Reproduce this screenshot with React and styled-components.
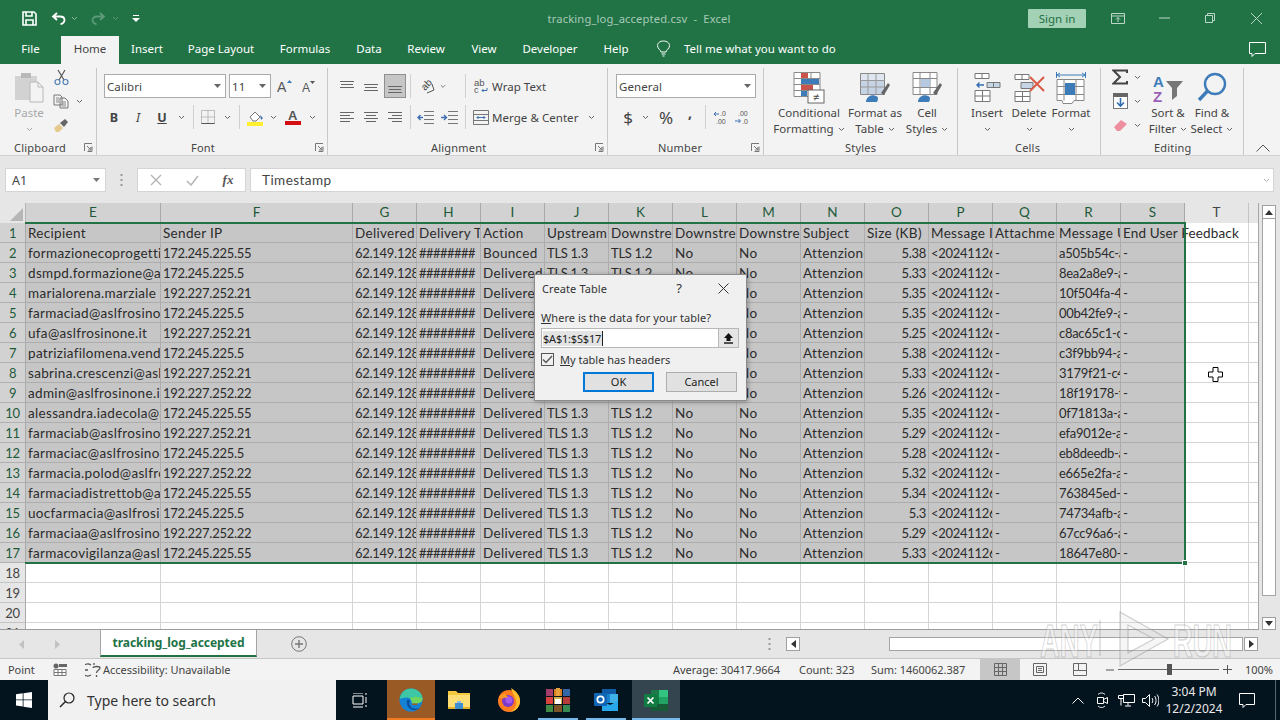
import React from 'react';
import styled, { createGlobalStyle } from 'styled-components';

const UI = '"Noto Sans", "Open Sans", sans-serif';
const GRID = 'Lato, "Liberation Sans", sans-serif';
const GREEN = '#217346';

const Global = createGlobalStyle`
  html, body { margin: 0; padding: 0; background: #fff; }
  * { box-sizing: border-box; }
`;

const Page = styled.div`
  width: 1280px; height: 720px; overflow: hidden; position: relative;
  display: flex; flex-direction: column; font-family: ${UI}; color: #444;
`;

/* ---------- title bar ---------- */
const TitleBar = styled.div`
  height: 36px; background: ${GREEN}; display: flex; align-items: center; position: relative;
`;
const QuickSlot = styled.div`
  width: ${p => p.$w}px; height: 36px; display: flex; align-items: center; justify-content: center;
  color: ${p => p.$dim ? '#5c9a78' : '#fff'}; flex: none;
`;
const DocTitle = styled.div`
  flex: none; width: ${p => p.$w}px; text-align: center; font-size: 11.2px; color: #a7c9b6;
  letter-spacing: .15px; white-space: pre;
`;
const SignIn = styled.div`
  width: 58px; height: 19px; background: #a3d1b5; border-radius: 1px; color: #1f7044;
  font-size: 11.5px; line-height: 19px; text-align: center; flex: none;
`;
const WinBtn = styled.div`
  width: 46px; height: 36px; flex: none; display: flex; align-items: center; justify-content: center;
  color: #bcd7c8; margin-left: ${p => p.$ml || 0}px;
`;

/* ---------- tabs ---------- */
const TabBar = styled.div`
  height: 28px; background: ${GREEN}; display: flex; align-items: flex-end; color: #fff;
`;
const Tab = styled.div`
  width: ${p => p.$w}px; height: ${p => p.$active ? 30 : 28}px; flex: none; text-align: center;
  font-size: 11.5px; line-height: 25px; padding-left: ${p => p.$pl || 0}px;
  background: ${p => p.$active ? '#f3f3f3' : 'transparent'};
  color: ${p => p.$active ? '#444' : '#fff'};
  ${p => p.$active ? 'line-height: 29px;' : ''}
`;
const TellMe = styled.div`
  display: flex; align-items: center; font-size: 11.5px; height: 25px; padding-left: 13px; flex: 1; color: #fff; align-self: flex-start;
`;
const TellIcon = styled.span`
  display: flex; width: 16px; margin-right: 12px;
`;
const CommentBtn = styled.div`
  width: 46px; display: flex; justify-content: center; height: 28px; align-items: center;
`;

/* ---------- ribbon ---------- */
const Ribbon = styled.div`
  height: 92px; background: #f3f3f3; display: flex; border-bottom: 1px solid #d2d2d2; flex: none;
`;
const Group = styled.div`
  width: ${p => p.$w}px; flex: none; display: flex; flex-direction: column; height: 91px;
  position: relative;
  &::after {
    content: ''; position: absolute; right: 0; top: 4px; bottom: 0; width: 1px; background: #c8c8c8;
  }
`;
const GroupBody = styled.div`
  height: 76px; flex: none; padding-left: ${p => p.$pl || 0}px;
  display: flex; flex-direction: ${p => p.$col ? 'column' : 'row'}; ${p => p.$col ? 'padding-top: 10px; gap: 7px;' : ''}
`;
const GroupLabel = styled.div`
  height: 15px; display: flex; align-items: center; font-size: 11px; color: #444;
  padding-left: ${p => p.$pl}px; padding-right: 4px; letter-spacing: .2px; line-height: 15px;
`;
const Launcher = styled.span`
  margin-left: auto; display: flex;
`;
const Row = styled.div`
  height: 24px; display: flex; align-items: center; padding-left: ${p => p.$pl || 0}px; flex: none;
`;
const Slot = styled.div`
  width: ${p => p.$w}px; height: 24px; flex: none; display: flex; align-items: center; justify-content: center;
  font-size: ${p => p.$fs || 12}px; color: ${p => p.$c || '#444'}; padding-bottom: ${p => p.$pb || 0}px;
`;
const ActiveSlot = styled(Slot)`
  height: 24px; background: #c6c6c6; border: 1px solid #8f8f8f; margin-left: 1px;
`;
const Sep = styled.div`
  width: ${p => p.$w}px; height: 24px; flex: none; display: flex; justify-content: center;
  &::before { content: ''; width: 1px; height: 24px; background: #d0d0d0; }
`;
const Combo = styled.div`
  width: ${p => p.$w}px; height: 24px; background: #fff; border: 1px solid #ababab; flex: none;
  margin-right: ${p => p.$mr || 0}px; display: flex; align-items: center; justify-content: space-between;
  padding: 0 4px 0 2px; font-size: 11.5px; color: #444; letter-spacing: .1px;
`;
const RowText = styled.span`
  font-size: 11.5px; color: #444; white-space: nowrap; width: ${p => p.$w}px; flex: none; letter-spacing: .05px;
`;
const BigBtn = styled.div`
  width: ${p => p.$w}px; flex: none; padding-top: 6px; display: flex; flex-direction: column; align-items: center;
  font-size: 11.5px; line-height: 16px; color: ${p => p.$dis ? '#a8a8a8' : '#444'}; text-align: center;
`;
const BigIcon = styled.div`
  height: 35px; display: flex; align-items: center; justify-content: center; flex: none;
`;
const Line = styled.div`
  height: 16px; white-space: nowrap; display: flex; align-items: center; justify-content: center; gap: 4px;
`;
const StackCol = styled.div`
  display: flex; flex-direction: column; padding-top: 1px; flex: none; width: ${p => p.$w}px; margin-left: ${p => p.$ml || 0}px;
`;
const Collapse = styled.div`
  flex: 1; display: flex; align-items: flex-end; justify-content: center; padding-bottom: 3px; padding-left: 2px;
`;

/* ---------- formula bar ---------- */
const FormulaBar = styled.div`
  height: 47px; background: #e6e6e6; flex: none; display: flex; padding: 12px 6px 0 5px; align-items: flex-start;
`;
const NameBox = styled.div`
  width: 101px; height: 24px; background: #fff; border: 1px solid #d4d4d4; display: flex; align-items: center;
  justify-content: space-between; padding: 0 5px 0 6px; font-size: 12.5px; color: #444;
`;
const Dots = styled.div`
  width: 31px; display: flex; justify-content: center; height: 24px; align-items: center;
`;
const FxBox = styled.div`
  width: 109px; height: 24px; background: #fff; border: 1px solid #d4d4d4; display: flex; align-items: center; flex: none;
`;
const FxSlot = styled.div`
  width: 36px; display: flex; justify-content: center; align-items: center; flex: none;
  font-family: "Liberation Serif", serif; font-style: italic; font-size: 13px; font-weight: 700; color: #555;
`;
const FormulaInput = styled.div`
  margin-left: 4px; flex: 1; height: 24px; background: #fff; border: 1px solid #d4d4d4; display: flex; align-items: center;
  justify-content: space-between; padding: 0 3px 0 11px; font-family: ${GRID}; font-size: 13.5px; color: #444; letter-spacing: .45px;
`;

/* ---------- sheet ---------- */
const SheetArea = styled.div`
  height: 427px; flex: none; display: flex; background: #e6e6e6;
`;
const Sheet = styled.div`
  width: 1259px; height: 427px; overflow: hidden; position: relative; background: #fff;
  border-right: 1px solid #a5a5a5; border-bottom: 1px solid #9c9c9c; flex: none;
  display: grid; grid-template-columns: 26px 135px 192px repeat(14, 64px) 10px; grid-auto-rows: 20px; align-content: start;
`;
const Corner = styled.div`
  background: #e6e6e6; position: relative; overflow: hidden; border-right: 1px solid #b5b5b5;
  &::after {
    content: ''; position: absolute; right: 2px; bottom: 2px; width: 0; height: 0;
    border-left: 13px solid transparent; border-bottom: 13px solid #b6b6b6;
  }
`;
const ColHead = styled.div`
  background: ${p => p.$sel ? '#d2d2d2' : '#e6e6e6'}; color: ${p => p.$sel ? '#1e5a3a' : '#444'};
  border-right: 1px solid ${p => p.$sel ? '#a9a9a9' : '#c4c4c4'}; text-align: center; font-family: ${GRID}; font-size: 13.5px; line-height: 19px;
`;
const RowHead = styled.div`
  background: ${p => p.$sel ? '#d2d2d2' : '#e6e6e6'}; color: ${p => p.$sel ? '#1e5a3a' : '#444'};
  border-right: 1px solid #a9a9a9; border-bottom: 1px solid ${p => p.$sel ? '#b0b0b0' : '#c4c4c4'}; text-align: center;
  font-family: ${GRID}; font-size: 13px; letter-spacing: -.3px; line-height: 20px;
`;
const Cell = styled.div`
  background: ${p => p.$sel ? '#c6c6c6' : '#fff'};
  border-right: 1px solid ${p => p.$sel ? '#adadad' : '#d4d4d4'};
  border-bottom: 1px solid ${p => p.$sel ? '#adadad' : '#d4d4d4'};
  font-family: ${GRID}; font-size: ${p => p.$num ? 13 : 13.5}px; line-height: 20px; color: #2b2b2b; white-space: nowrap;
  letter-spacing: ${p => p.$hash ? '-.55px' : p.$num ? '-.28px' : p.$over ? '.16px' : '.32px'};
  padding: 0 ${p => p.$right ? 2 : 0}px 0 ${p => p.$right ? 0 : 2}px;
  text-align: ${p => p.$right ? 'right' : 'left'};
  overflow: ${p => p.$over ? 'visible' : 'hidden'};
  position: ${p => p.$over ? 'relative' : 'static'}; z-index: ${p => p.$over ? 1 : 'auto'};
`;
const Selection = styled.div`
  position: absolute; left: 25px; top: 19px; width: 1161px; height: 342px; z-index: 3; pointer-events: none;
  border-top: 2px solid ${GREEN}; border-right: 2px solid ${GREEN}; border-bottom: 2px solid ${GREEN};
`;
const FillHandle = styled.div`
  position: absolute; right: -4px; bottom: -4px; width: 6px; height: 6px; background: ${GREEN}; border: 1px solid #fff;
`;
const VScroll = styled.div`
  width: 15px; margin-left: 3px; display: flex; flex-direction: column; flex: none; padding-top: 2px;
`;
const ScrollBtn = styled.div`
  width: ${p => p.$w || 14}px; height: ${p => p.$h || 14}px; background: #fff; border: 1px solid #9f9f9f; flex: none;
  display: flex; align-items: center; justify-content: center;
`;
const VThumb = styled.div`
  width: 14px; height: 377px; background: #fff; border: 1px solid #a5a5a5; border-top: 0; flex: none;
`;
const VGap = styled.div`
  flex: 1;
`;

/* ---------- dialog ---------- */
const Dialog = styled.div`
  position: absolute; left: 534px; top: 274px; width: 213px; height: 127px; background: #f0f0f0; z-index: 6;
  border: 1px solid #8c8c8c; box-shadow: 1px 1px 5px rgba(0,0,0,.3); font-size: 11px; color: #333;
  display: flex; flex-direction: column; padding: 0 6px;
`;
const DialogTitle = styled.div`
  height: 26px; display: flex; align-items: center; font-size: 11px; color: #333;
  margin: 0 -6px; padding: 0 7px; letter-spacing: .1px;
`;
const DTitleText = styled.span`
  width: 130px; flex: none;
`;
const DHelp = styled.span`
  width: 14px; text-align: center; font-size: 13px; flex: none;
`;
const DClose = styled.span`
  width: 18px; margin-left: 28px; display: flex; justify-content: center;
`;
const DLabel = styled.div`
  margin-top: 9px; height: 16px; line-height: 16px; font-size: 11px; letter-spacing: .05px;
`;
const DInputRow = styled.div`
  margin-top: 2px; height: 20px; border: 1px solid #b7b7b7; background: #fff; display: flex; width: 198px;
`;
const DInput = styled.div`
  flex: 1; padding-left: 1px; display: flex; align-items: center; font-size: 11px; color: #222;
`;
const DSelText = styled.span`
  background: #e4e4e4; border-right: 1px solid #222; padding-right: 1px; line-height: 15px; letter-spacing: -.2px;
`;
const DRefBtn = styled.div`
  width: 20px; background: #e5e5e5; border-left: 1px solid #b7b7b7; display: flex; align-items: center; justify-content: center;
`;
const DCheckRow = styled.div`
  display: flex; align-items: center; margin-top: 4px; height: 14px; font-size: 11px;
`;
const DCheck = styled.div`
  width: 13px; height: 13px; border: 1px solid #555; background: #f0f0f0; margin-right: 6px; display: flex; align-items: center; justify-content: center;
`;
const DButtons = styled.div`
  display: flex; margin-top: 6px; padding-left: 42px; gap: 12px;
`;
const DBtn = styled.div`
  width: 71px; height: 20px; background: #e1e1e1; border: ${p => p.$main ? `2px solid #0078d7` : `1px solid #adadad`};
  text-align: center; font-size: 11px; line-height: ${p => p.$main ? 16 : 18}px; color: #222;
`;

/* ---------- sheet tabs ---------- */
const TabsRow = styled.div`
  height: 29px; background: #e6e6e6; border-bottom: 1px solid #c6c6c6; display: flex; flex: none; align-items: flex-start;
`;
const NavSlot = styled.div`
  width: ${p => p.$w}px; height: 28px; display: flex; align-items: center; justify-content: center; flex: none;
`;
const SheetTab = styled.div`
  width: 157px; height: 28px; margin-top: -1px; background: #fff; border: 1px solid #a5a5a5; border-top: 0; border-bottom: 2px solid ${GREEN};
  color: ${GREEN}; font-size: 12px; font-weight: 700; text-align: center; line-height: 27px; flex: none; letter-spacing: -.05px;
`;
const HScroll = styled.div`
  margin-left: 10px; width: 472px; height: 15px; margin-top: 7px; display: flex; flex: none; background: #e6e6e6; position: relative;
`;
const HThumb = styled.div`
  margin-left: 89px; width: 354px; height: 14px; background: #fff; border: 1px solid #a5a5a5; flex: none;
`;
const Watermark = styled.svg`
  position: absolute; left: 1038px; top: 608px; z-index: 5; pointer-events: none;
`;
const CrossCursor = styled.svg`
  position: absolute; left: 1208px; top: 367px; z-index: 7;
`;

/* ---------- status ---------- */
const StatusBar = styled.div`
  height: 21px; background: #f3f3f3; display: flex; align-items: center; font-size: 11px; color: #444; flex: none;
`;
const StatusText = styled.span`
  flex: none; white-space: nowrap; margin-left: ${p => p.$ml || 0}px; width: ${p => p.$w ? `${p.$w}px` : 'auto'}; letter-spacing: -.03px;
`;
const StatusIcon = styled.span`
  display: flex; flex: none; justify-content: center; width: ${p => p.$w}px; margin-left: ${p => p.$ml || 0}px;
`;
const ViewBtn = styled.div`
  width: 40px; height: 21px; display: flex; align-items: center; justify-content: center; flex: none;
  background: ${p => p.$on ? '#c6c6c6' : 'transparent'};
`;
const Slider = styled.div`
  width: 101px; height: 1px; background: #666; position: relative; flex: none;
`;
const SliderThumb = styled.div`
  position: absolute; left: 49px; top: -5px; width: 5px; height: 11px; background: #555;
`;

/* ---------- taskbar ---------- */
const Taskbar = styled.div`
  height: 40px; background: #04141f; display: flex; align-items: center; flex: none; color: #fff;
`;
const SearchBox = styled.div`
  width: 288px; height: 40px; background: #f1f1f1; display: flex; align-items: center; color: #333; font-size: 14px; flex: none; padding-left: 11px;
`;
const SearchIcon = styled.span`
  display: flex; width: 28px; flex: none;
`;
const TaskBtn = styled.div`
  width: ${p => p.$w || 48}px; height: 40px; flex: none; display: flex; align-items: center; justify-content: center; position: relative;
  background: ${p => p.$bg || 'transparent'}; margin-left: ${p => p.$ml || 0}px;
  ${p => p.$line ? `&::after { content: ''; position: absolute; left: ${(48 - (p.$lw || 48)) / 2}px; bottom: 0; width: ${p.$lw || 48}px; height: 2px; background: ${p.$line}; }` : ''}
`;
const Tray = styled.div`
  width: 24px; height: 40px; display: flex; align-items: center; justify-content: center; flex: none; margin-left: ${p => p.$ml || 0}px;
`;
const Clock = styled.div`
  width: 62px; margin-left: 1px; text-align: center; font-size: 12px; line-height: 17px; color: #e8e8e8; flex: none;
`;
const ShowDesktop = styled.div`
  width: 1px; height: 40px; background: #5a6670; margin-left: 6px; flex: none;
`;

/* ---------- icons ---------- */
const Chev = ({ c = '#666' }) => (
  <svg width="7" height="5" viewBox="0 0 7 5"><path d="M1 1l2.5 2.5L6 1" fill="none" stroke={c} strokeWidth="1" /></svg>
);
const SolidDown = ({ c = '#666' }) => (
  <svg width="7" height="4" viewBox="0 0 7 4"><path d="M0 0h7L3.5 4z" fill={c} /></svg>
);
const LauncherIcon = () => (
  <svg width="9" height="9" viewBox="0 0 9 9"><path d="M.5 8V.5H8M8 3.5v5H3.5M3 3l3.6 3.6M6.8 4v3H4" fill="none" stroke="#777" /></svg>
);
const AlignLines = ({ rows }) => (
  <svg width="16" height="16" viewBox="0 0 16 16">
    {rows.map(([y, x, l], i) => <path key={i} d={`M${x} ${y}.5h${l}`} stroke="#666" />)}
  </svg>
);
const SaveIcon = () => (
  <svg width="15" height="15" viewBox="0 0 15 15"><path d="M1 1h11l2 2v11H1z M4 1v4h6V1 M4 14V9h7v5" fill="none" stroke="#fff" strokeWidth="1.6" /></svg>
);
const UndoIcon = ({ c = '#fff' }) => (
  <svg width="15" height="13" viewBox="0 0 15 13"><path d="M6 1L2 4.5 6 8M2 4.5h7c3 0 4.5 1.800 4.500 3.500S12 12 9.500 12" fill="none" stroke={c} strokeWidth="1.800" /></svg>
);
const ScissorsIcon = () => (
  <svg width="15" height="16" viewBox="0 0 15 16"><path d="M4 1l6 10M11 1L5 11" stroke="#555" strokeWidth="1.200" fill="none" /><circle cx="3.500" cy="13" r="2.500" fill="none" stroke="#4e7fb5" strokeWidth="1.200" /><circle cx="11.500" cy="13" r="2.500" fill="none" stroke="#4e7fb5" strokeWidth="1.200" /></svg>
);
const CopyIcon = () => (
  <svg width="16" height="15" viewBox="0 0 16 15"><path d="M1 1h6l2 2v8H1zM7 4h5l3 3v7H7z" fill="#f3f3f3" stroke="#777" /><path d="M3 4h3M3 6h3M3 8h3M9 8h4M9 10h4M9 12h4" stroke="#888" /></svg>
);
const BrushIcon = () => (
  <svg width="16" height="15" viewBox="0 0 16 15"><path d="M1 10l5-4 4 4-4 4H3z" fill="#e6c98c" /><path d="M7 5l4 4 4-5-3-3z" fill="#666" /></svg>
);
const PasteIcon = () => (
  <svg width="30" height="32" viewBox="0 0 30 32"><rect x="1" y="4" width="22" height="24" fill="#d2d2d2" /><rect x="7" y="1" width="10" height="5" fill="#b9b9b9" /><path d="M16 10h8l5 5v15H16z" fill="#f3f3f3" stroke="#b8b8b8" /><path d="M24 10v5h5" fill="none" stroke="#b8b8b8" /></svg>
);
const FillIcon = () => (
  <svg width="17" height="17" viewBox="0 0 17 17"><path d="M3 8l5-5 5 5-4 4H6z" fill="#fff" stroke="#777" /><path d="M13 6l3 3-2 2z" fill="#3e6fb0" /><rect x="0" y="13" width="16" height="4" fill="#ffef2e" /></svg>
);
const FontColorIcon = () => (
  <svg width="16" height="17" viewBox="0 0 16 17"><text x="3" y="11" fontSize="13" fontFamily="Liberation Sans" fontWeight="700" fill="#555">A</text><rect x="0" y="12" width="16" height="4" fill="#d40f14" /></svg>
);
const BorderIcon = () => (
  <svg width="14" height="14" viewBox="0 0 14 14"><path d="M.5 .5h13v13H.5zM7 .5v13M.5 7h13" fill="none" stroke="#8a8a8a" strokeDasharray="1 1" /><path d="M.5 13.500h13" stroke="#555" /></svg>
);
const OrientIcon = () => (
  <svg width="17" height="17" viewBox="0 0 17 17"><text x="3" y="10" fontSize="10" transform="rotate(-45 8 8)" fontFamily="Liberation Sans" fill="#444">ab</text><path d="M8 15l7-3-2-6" fill="none" stroke="#555" /></svg>
);
const WrapIcon = () => (
  <svg width="17" height="16" viewBox="0 0 17 16"><text x="1" y="8" fontSize="9.500" fontFamily="Liberation Sans" fill="#555">ab</text><text x="1" y="15" fontSize="9" fontFamily="Liberation Sans" fill="#555">c</text><path d="M14 10v2.500H9M10.500 11l-1.500 1.500 1.500 1.500" fill="none" stroke="#3e6fb0" /></svg>
);
const MergeIcon = () => (
  <svg width="16" height="15" viewBox="0 0 16 15"><path d="M.5 .5h15v14H.5zM.5 4.500h15M.5 10.500h15" fill="none" stroke="#777" /><path d="M4 7.500h8" stroke="#3e6fb0" /><path d="M5.500 6l-1.500 1.500 1.500 1.500M10.500 6l1.500 1.500-1.500 1.500" fill="none" stroke="#3e6fb0" /></svg>
);
const IndentIcon = ({ flip }) => (
  <svg width="17" height="14" viewBox="0 0 17 14"><path d="M7 1.500h10M7 5.500h10M7 9.500h10M7 13.500h10" stroke="#777" />
    {flip ? <path d="M0 7.500h5M3 5l2.500 2.500L3 10" fill="none" stroke="#3e6fb0" strokeWidth="1.400" /> : <path d="M6 7.500H1M3.500 5L1 7.500 3.500 10" fill="none" stroke="#3e6fb0" strokeWidth="1.400" />}
  </svg>
);
const DecIcon = ({ rev }) => (
  <svg width="16" height="15" viewBox="0 0 16 15">
    <text x={rev ? 3 : 7} y="6" fontSize="7" fontFamily="Liberation Sans" fill="#555">{rev ? '.00' : '.0'}</text>
    <text x={rev ? 7 : 3} y="14" fontSize="7" fontFamily="Liberation Sans" fill="#555">{rev ? '.0' : '.00'}</text>
    {rev ? <path d="M0 11h5M3.500 9L5.500 11 3.500 13" fill="none" stroke="#3e6fb0" /> : <path d="M6 4H1M3 2L1 4l2 2" fill="none" stroke="#3e6fb0" />}
  </svg>
);
const CondIcon = () => (
  <svg width="32" height="32" viewBox="0 0 32 32"><path d="M1 .5h26v24H1zM10 .5v24M18 .5v24M1 6.500h26M1 12.500h26M1 18.500h26" fill="#fff" stroke="#8a8a8a" /><rect x="8" y="1" width="7" height="5" fill="#c9534a" /><rect x="8" y="7" width="18" height="5" fill="#3e7cb9" /><rect x="8" y="13" width="12" height="5" fill="#c9534a" /><rect x="8" y="19" width="6" height="5" fill="#3e7cb9" /><rect x="15" y="18" width="16" height="13" fill="#fff" stroke="#666" /><text x="23" y="29" fontSize="11" textAnchor="middle" fontFamily="Liberation Sans" fill="#444">≠</text></svg>
);
const TableStyleIcon = () => (
  <svg width="30" height="31" viewBox="0 0 30 31"><path d="M.5 1.500h24v21H.5z" fill="#fff" stroke="#888" /><rect x="1" y="2" width="23" height="6" fill="#dfe6ef" /><rect x="1" y="9" width="23" height="13" fill="#c5d3e5" /><path d="M8 1.500v21M16 1.500v21M.5 8.500h24M.5 15h24" stroke="#999" /><path d="M21 21l7-10 2 2-6 10z" fill="#666" /><path d="M6 30c0-5 6-8 10-6 3 1 2 4 1 6z" fill="#3e7cb9" /></svg>
);
const CellStyleIcon = () => (
  <svg width="30" height="31" viewBox="0 0 30 31"><path d="M1 .500h24v22H1zM8 .500v22M18 .500v22M1 6.500h24M1 15.500h24" fill="#fff" stroke="#888" /><rect x="9" y="7" width="9" height="8" fill="#b5c9e2" /><path d="M21 21l7-10 2 2-6 10z" fill="#666" /><path d="M6 30c0-5 6-8 10-6 3 1 2 4 1 6z" fill="#3e7cb9" /></svg>
);
const InsertIcon = () => (
  <svg width="27" height="31" viewBox="0 0 27 31"><path d="M1 1.500h14v5H1zM8 1.500v5M1 18.500h15v11H1zM8.500 18.500v11M1 24h15" fill="#fff" stroke="#777" /><path d="M13 10.500h13v5H13zM19.500 10.500v5" fill="#c6d5e6" stroke="#777" /><path d="M10 13H3M5.500 10.500L3 13l2.500 2.500" fill="none" stroke="#2f6db0" strokeWidth="1.400" /></svg>
);
const DeleteIcon = () => (
  <svg width="31" height="30" viewBox="0 0 31 30"><path d="M1 1.500h14v5H1zM8 1.500v5M1 18.500h15v10H1zM8.500 18.500v10M1 23.500h15" fill="#fff" stroke="#777" /><path d="M7 9.500h12v6H7z" fill="#c6d5e6" stroke="#777" /><path d="M16 4l14 14M30 4L16 18" stroke="#dc5a44" strokeWidth="2" /></svg>
);
const FormatCellIcon = () => (
  <svg width="30" height="33" viewBox="0 0 30 33"><path d="M.5 1v6M29.500 1v6" stroke="#3e7cb9" /><path d="M1 4h28M4 2L1 4l3 2M26 2l3 2-3 2" fill="none" stroke="#3e7cb9" /><path d="M1 8.500h27v21H18l-2 3H7l-1-3H1zM8 8.500v21M20 8.500v21M1 15.500h27M1 23.500h27" fill="#fff" stroke="#888" /><rect x="9" y="12" width="10" height="12" fill="#3e7cb9" /></svg>
);
const SumIcon = () => (
  <svg width="16" height="16" viewBox="0 0 16 16"><path d="M15 4V1.500H1.500L8 8l-6.500 6.500H15V12" fill="none" stroke="#444" strokeWidth="2" /></svg>
);
const DownFillIcon = () => (
  <svg width="15" height="16" viewBox="0 0 15 16"><rect x=".5" y=".5" width="14" height="15" fill="#fff" stroke="#777" /><rect x="0" y="0" width="15" height="4" fill="#666" /><path d="M7.500 5v8M4 9.500l3.500 3.500L11 9.500" fill="none" stroke="#2f6db0" strokeWidth="1.600" /></svg>
);
const EraserIcon = () => (
  <svg width="15" height="13" viewBox="0 0 15 13"><path d="M1 8l7-7 6 4-7 7H4z" fill="#ee8fa0" /></svg>
);
const SortFilterIcon = () => (
  <svg width="31" height="30" viewBox="0 0 31 30"><text x="0" y="14" fontSize="15" fontFamily="Liberation Sans" fontWeight="700" fill="#3e7cb9">A</text><text x="0" y="29" fontSize="15" fontFamily="Liberation Sans" fontWeight="700" fill="#9a5fb4">Z</text><path d="M13 8h17l-6 7v8l-5 4V15z" fill="#777" /></svg>
);
const FindIcon = () => (
  <svg width="30" height="31" viewBox="0 0 30 31"><circle cx="18" cy="12" r="10" fill="none" stroke="#3e7cb9" strokeWidth="2.400" /><path d="M10.500 19L2 28" stroke="#3e7cb9" strokeWidth="3.400" /></svg>
);
const WinLogo = () => (
  <svg width="16" height="16" viewBox="0 0 16 16"><path d="M0 2.300L6.700 1.300v6.100H0zM7.500 1.200L16 0v7.400H7.500zM0 8.200h6.700v6.200L0 13.500zM7.500 8.200H16V16l-8.500-1.200z" fill="#fff" /></svg>
);
const EdgeIcon = () => (
  <svg width="24" height="24" viewBox="0 0 24 24"><circle cx="12" cy="12" r="11.500" fill="#1583d4" /><path d="M.6 11C1.600 4.500 6.500.5 12 .5c6 0 11.500 4.500 11.500 10 0 3.500-3 5-6.500 5h-4c0-3-2-6-5-6-3.500 0-6 1-7.400 1.500z" fill="#3ec7a4" /><path d="M23.500 10.500c0 3.500-3 5-6.500 5h-4c0-2-.500-4-2-5 3-2 7-2.500 9.500-1 1.500.500 3 .5 3 1z" fill="#6fd65e" /><path d="M8 12c-1 4 1 9 6 10 3 .5 5-.5 7-2-3 1-7 1-9-1-2-2-2-5-1-7-1-.5-2-.5-3 0z" fill="#0b4f9e" /><path d="M13 15.500h6l-1 1.500h-5z" fill="#995a26" /></svg>
);
const FolderIcon = () => (
  <svg width="22" height="19" viewBox="0 0 22 19"><path d="M0 0h8l2 2h12v2H0z" fill="#f5c93e" /><path d="M0 4h22v14H0z" fill="#ffdf74" /><rect x="0" y="16" width="22" height="2" fill="#e6b22d" /><path d="M7 12h8v6H7z" fill="#3f8ed0" /><path d="M9 10h4v2H9z" fill="#89bde8" /></svg>
);
const FirefoxIcon = () => (
  <svg width="24" height="24" viewBox="0 0 24 24"><circle cx="12" cy="13" r="11" fill="#ff7b1d" /><path d="M14 0c5 3 9 7 9 13 0 6-4 10-10 11 6-3 8-9 5-14-1-3-3-6-4-10z" fill="#ffbd2e" /><circle cx="11" cy="13" r="6" fill="#7d3bcc" /><circle cx="12" cy="12" r="3.500" fill="#a658e8" /><path d="M2 9c2-3 4-3 6-3l3 3c-3 1-7 2-9 0z" fill="#ff9a25" /></svg>
);
const RarIcon = () => (
  <svg width="24" height="24" viewBox="0 0 24 24"><rect x="0" y="1" width="7" height="7" fill="#a33d6a" /><rect x="0" y="9" width="7" height="7" fill="#d9423e" /><rect x="0" y="17" width="7" height="7" fill="#3f8a45" /><rect x="8" y="1" width="8" height="7" fill="#d77e27" /><rect x="8" y="9" width="8" height="7" fill="#d4b04a" /><rect x="8" y="17" width="8" height="7" fill="#7d5426" /><rect x="17" y="1" width="7" height="7" fill="#3566a8" /><rect x="17" y="9" width="7" height="7" fill="#b73d3a" /><rect x="17" y="17" width="7" height="7" fill="#388a55" /><rect x="9" y="11" width="6" height="5" fill="#fff" /><rect x="10" y="0" width="4" height="8" fill="#e8a23b" /></svg>
);
const OutlookIcon = () => (
  <svg width="24" height="22" viewBox="0 0 24 22"><rect x="8" y="0" width="14" height="5" fill="#0f5ba6" /><rect x="8" y="5" width="8" height="9" fill="#1b82cf" /><rect x="16" y="5" width="8" height="9" fill="#3fb0e8" /><path d="M8 12l8 4 8-4v10H8z" fill="#28a8ea" /><rect x="0" y="4" width="13" height="13" rx="1" fill="#0f64b4" /><circle cx="6.500" cy="10.500" r="3.200" fill="none" stroke="#fff" strokeWidth="1.700" /></svg>
);
const ExcelIcon = () => (
  <svg width="24" height="21" viewBox="0 0 24 21"><rect x="7" y="0" width="17" height="21" rx="1" fill="#21a366" /><rect x="7" y="0" width="8" height="7" fill="#1d7a4a" /><rect x="15" y="0" width="9" height="7" fill="#33c481" /><rect x="7" y="7" width="8" height="7" fill="#107c41" /><rect x="7" y="14" width="17" height="7" fill="#185c37" /><rect x="0" y="4" width="13" height="13" rx="1" fill="#107c41" /><path d="M3.500 7.500l6 6M9.500 7.500l-6 6" stroke="#fff" strokeWidth="1.700" /></svg>
);

/* ---------- data ---------- */
const columns = [['E', 135], ['F', 192], ...'GHIJKLMNOPQRST'.split('').map(c => [c, 64]), ['', 10]];
const head = ['Recipient', 'Sender IP', 'Delivered', 'Delivery T', 'Action', 'Upstream', 'Downstre', 'Downstre', 'Downstre', 'Subject', 'Size (KB)', 'Message I', 'Attachme', 'Message U', 'End User Feedback'];
const recipients = ['formazionecoprogetti@', 'dsmpd.formazione@asl', 'marialorena.marziale', 'farmaciad@aslfrosinone', 'ufa@aslfrosinone.it', 'patriziafilomena.venditti', 'sabrina.crescenzi@asl', 'admin@aslfrosinone.it', 'alessandra.iadecola@a', 'farmaciab@aslfrosinone', 'farmaciac@aslfrosinone', 'farmacia.polod@aslfros', 'farmaciadistrettob@asl', 'uocfarmacia@aslfrosino', 'farmaciaa@aslfrosinone', 'farmacovigilanza@aslfr'];
const ips = ['172.245.225.55', '172.245.225.5', '192.227.252.21', '172.245.225.5', '192.227.252.21', '172.245.225.5', '192.227.252.21', '192.227.252.22', '172.245.225.55', '192.227.252.21', '172.245.225.5', '192.227.252.22', '172.245.225.55', '172.245.225.5', '192.227.252.22', '172.245.225.55'];
const sizes = ['5.38', '5.33', '5.35', '5.35', '5.25', '5.38', '5.33', '5.26', '5.35', '5.29', '5.28', '5.32', '5.34', '5.3', '5.29', '5.33'];
const ids = ['a505b54c-a', '8ea2a8e9-a', '10f504fa-4a', '00b42fe9-a', 'c8ac65c1-c', 'c3f9bb94-a', '3179f21-c4a', '18f19178-f', '0f71813a-a', 'efa9012e-a', 'eb8deedb-a', 'e665e2fa-a', '763845ed-a', '74734afb-a', '67cc96a6-a', '18647e80-a'];
const numCols = new Set([1, 2, 3, 5, 6, 10, 11, 13]);

const rowValues = i => [recipients[i], ips[i], '62.149.128.10', '########', i === 0 ? 'Bounced' : 'Delivered', 'TLS 1.3', 'TLS 1.2', 'No', 'No', 'Attenzione', sizes[i], '<20241126', '-', ids[i], '-', '', ''];

export default function App() {
  return (
    <Page>
      <Global />
      <TitleBar>
        <QuickSlot $w={17} />
        <QuickSlot $w={24}><SaveIcon /></QuickSlot>
        <QuickSlot $w={6} />
        <QuickSlot $w={22}><UndoIcon /></QuickSlot>
        <QuickSlot $w={10}><Chev c="#8dbca2" /></QuickSlot>
        <QuickSlot $w={8} />
        <QuickSlot $w={22} $dim><svg width="15" height="13" viewBox="0 0 15 13"><path d="M9 1l4 3.500L9 8M13 4.500H6C3 4.500 1.500 6.300 1.500 8S3 12 5.500 12" fill="none" stroke="#5c9a78" strokeWidth="1.800" /></svg></QuickSlot>
        <QuickSlot $w={12}><Chev c="#5c9a78" /></QuickSlot>
        <QuickSlot $w={9} />
        <QuickSlot $w={12}><svg width="8" height="7" viewBox="0 0 8 7"><path d="M1 .5h6" stroke="#fff" /><path d="M0 3h8L4 7z" fill="#fff" /></svg></QuickSlot>
        <QuickSlot $w={393} />
        <DocTitle $w={208}>tracking_log_accepted.csv  -  Excel</DocTitle>
        <QuickSlot $w={285} />
        <SignIn>Sign in</SignIn>
        <WinBtn $ml={9}><svg width="14" height="11" viewBox="0 0 14 11"><path d="M.5.5h13v10H.5zM.5 3h13M7 9V4.500M5 6.500l2-2 2 2" fill="none" stroke="#bcd7c8" /></svg></WinBtn>
        <WinBtn><svg width="11" height="2" viewBox="0 0 11 2"><path d="M0 1h11" stroke="#bcd7c8" /></svg></WinBtn>
        <WinBtn><svg width="10" height="10" viewBox="0 0 10 10"><path d="M.5 2.500h7v7h-7zM2.500 2.500v-2h7v7h-2" fill="none" stroke="#bcd7c8" /></svg></WinBtn>
        <WinBtn><svg width="11" height="11" viewBox="0 0 11 11"><path d="M0 0l11 11M11 0L0 11" stroke="#bcd7c8" /></svg></WinBtn>
      </TitleBar>

      <TabBar>
        <Tab $w={61}>File</Tab>
        <Tab $w={58} $active>Home</Tab>
        <Tab $w={56}>Insert</Tab>
        <Tab $w={92}>Page Layout</Tab>
        <Tab $w={76}>Formulas</Tab>
        <Tab $w={52}>Data</Tab>
        <Tab $w={62}>Review</Tab>
        <Tab $w={54}>View</Tab>
        <Tab $w={78}>Developer</Tab>
        <Tab $w={54}>Help</Tab>
        <TellMe>
          <TellIcon><svg width="15" height="17" viewBox="0 0 15 17"><path d="M5 12c0-2-3.500-3-3.500-6.500C1.500 3 4 1 7.500 1s6 2 6 4.500C13.500 9 10 10 10 12zM5.500 14h4M6.500 16h2" fill="none" stroke="#fff" /></svg></TellIcon>
          Tell me what you want to do
        </TellMe>
        <CommentBtn><svg width="17" height="16" viewBox="0 0 17 16"><path d="M.5.5h16v11H6l-3 3v-3H.5z" fill="none" stroke="#fff" /></svg></CommentBtn>
      </TabBar>

      <Ribbon>
        <Group $w={97}>
          <GroupBody $pl={11}>
            <BigBtn $w={36} $dis>
              <BigIcon><PasteIcon /></BigIcon>
              <Line>Paste</Line>
              <Line><Chev c="#aaa" /></Line>
            </BigBtn>
            <StackCol $w={24} $ml={2}>
              <Slot $w={24}><ScissorsIcon /></Slot>
              <Slot $w={24}><CopyIcon /></Slot>
              <Slot $w={24}><BrushIcon /></Slot>
            </StackCol>
            <StackCol $w={12}>
              <Slot $w={12} />
              <Slot $w={12}><Chev /></Slot>
            </StackCol>
          </GroupBody>
          <GroupLabel $pl={14}>Clipboard<Launcher><LauncherIcon /></Launcher></GroupLabel>
        </Group>

        <Group $w={231}>
          <GroupBody $col>
            <Row $pl={7}>
              <Combo $w={122} $mr={3}>Calibri<SolidDown /></Combo>
              <Combo $w={42}>11<SolidDown /></Combo>
              <Slot $w={26} $fs={15}><svg width="15" height="14" viewBox="0 0 15 14"><text x="0" y="13" fontSize="14" fontFamily="Liberation Sans" fill="#555">A</text><path d="M10 4l2.500-3L15 4z" fill="#3e7cb9" /></svg></Slot>
              <Slot $w={22}><svg width="13" height="12" viewBox="0 0 13 12"><text x="0" y="12" fontSize="12" fontFamily="Liberation Sans" fill="#555">A</text><path d="M8 1h5l-2.500 3z" fill="#555" /></svg></Slot>
            </Row>
            <Row $pl={5}>
              <Slot $w={24} $fs={12.5}><b>B</b></Slot>
              <Slot $w={24} $fs={12.5}><i>I</i></Slot>
              <Slot $w={24} $fs={12.5}><b><u>U</u></b></Slot>
              <Slot $w={14}><Chev /></Slot>
              <Sep $w={10} />
              <Slot $w={20}><BorderIcon /></Slot>
              <Slot $w={18}><Chev /></Slot>
              <Sep $w={6} />
              <Slot $w={26}><FillIcon /></Slot>
              <Slot $w={10}><Chev /></Slot>
              <Slot $w={30}><FontColorIcon /></Slot>
              <Slot $w={8}><Chev /></Slot>
            </Row>
          </GroupBody>
          <GroupLabel $pl={94}>Font<Launcher><LauncherIcon /></Launcher></GroupLabel>
        </Group>

        <Group $w={280}>
          <GroupBody $col>
            <Row $pl={7}>
              <Slot $w={24}><AlignLines rows={[[3, 1, 14], [6, 2, 12], [9, 1, 14]]} /></Slot>
              <Slot $w={24}><AlignLines rows={[[6, 1, 14], [9, 2, 12], [12, 1, 14]]} /></Slot>
              <ActiveSlot $w={22}><AlignLines rows={[[8, 1, 14], [11, 2, 12], [14, 1, 14]]} /></ActiveSlot>
              <Sep $w={8} />
              <Slot $w={26}><OrientIcon /></Slot>
              <Slot $w={6}><Chev /></Slot>
              <Slot $w={14} />
              <Sep $w={10} />
              <Slot $w={22}><WrapIcon /></Slot>
              <RowText $w={60}>Wrap Text</RowText>
            </Row>
            <Row $pl={7}>
              <Slot $w={24}><AlignLines rows={[[3, 1, 14], [6, 1, 10], [9, 1, 14], [12, 1, 10]]} /></Slot>
              <Slot $w={24}><AlignLines rows={[[3, 1, 14], [6, 3, 10], [9, 1, 14], [12, 3, 10]]} /></Slot>
              <Slot $w={24}><AlignLines rows={[[3, 1, 14], [6, 5, 10], [9, 1, 14], [12, 5, 10]]} /></Slot>
              <Sep $w={6} />
              <Slot $w={24}><IndentIcon /></Slot>
              <Slot $w={24}><IndentIcon flip /></Slot>
              <Sep $w={8} />
              <Slot $w={23}><MergeIcon /></Slot>
              <RowText $w={87}>Merge &amp; Center</RowText>
              <Slot $w={24}><Chev /></Slot>
            </Row>
          </GroupBody>
          <GroupLabel $pl={103}>Alignment<Launcher><LauncherIcon /></Launcher></GroupLabel>
        </Group>

        <Group $w={156}>
          <GroupBody $col>
            <Row $pl={8}><Combo $w={140}>General<SolidDown /></Combo></Row>
            <Row $pl={8}>
              <Slot $w={24} $fs={17}>$</Slot>
              <Slot $w={10}><Chev /></Slot>
              <Slot $w={32} $fs={17}>%</Slot>
              <Slot $w={16} $fs={14} $pb={9}><b>,</b></Slot>
              <Sep $w={14} />
              <Slot $w={18}><DecIcon /></Slot>
              <Slot $w={26}><DecIcon rev /></Slot>
            </Row>
          </GroupBody>
          <GroupLabel $pl={50}>Number<Launcher><LauncherIcon /></Launcher></GroupLabel>
        </Group>

        <Group $w={194}>
          <GroupBody $pl={9}>
            <BigBtn $w={72}>
              <BigIcon><CondIcon /></BigIcon>
              <Line>Conditional</Line>
              <Line>Formatting <Chev /></Line>
            </BigBtn>
            <BigBtn $w={60}>
              <BigIcon><TableStyleIcon /></BigIcon>
              <Line>Format as</Line>
              <Line>Table <Chev /></Line>
            </BigBtn>
            <BigBtn $w={44}>
              <BigIcon><CellStyleIcon /></BigIcon>
              <Line>Cell</Line>
              <Line>Styles <Chev /></Line>
            </BigBtn>
          </GroupBody>
          <GroupLabel $pl={81}>Styles</GroupLabel>
        </Group>

        <Group $w={143}>
          <GroupBody $pl={8}>
            <BigBtn $w={42}>
              <BigIcon><InsertIcon /></BigIcon>
              <Line>Insert</Line>
              <Line><Chev /></Line>
            </BigBtn>
            <BigBtn $w={42}>
              <BigIcon><DeleteIcon /></BigIcon>
              <Line>Delete</Line>
              <Line><Chev /></Line>
            </BigBtn>
            <BigBtn $w={42}>
              <BigIcon><FormatCellIcon /></BigIcon>
              <Line>Format</Line>
              <Line><Chev /></Line>
            </BigBtn>
          </GroupBody>
          <GroupLabel $pl={57}>Cells</GroupLabel>
        </Group>

        <Group $w={143}>
          <GroupBody $pl={7}>
            <StackCol $w={24}>
              <Slot $w={24}><SumIcon /></Slot>
              <Slot $w={24}><DownFillIcon /></Slot>
              <Slot $w={24}><EraserIcon /></Slot>
            </StackCol>
            <StackCol $w={14}>
              <Slot $w={10}><Chev /></Slot>
              <Slot $w={10}><Chev /></Slot>
              <Slot $w={10}><Chev /></Slot>
            </StackCol>
            <BigBtn $w={44}>
              <BigIcon><SortFilterIcon /></BigIcon>
              <Line>Sort &amp;</Line>
              <Line>Filter <Chev /></Line>
            </BigBtn>
            <BigBtn $w={44}>
              <BigIcon><FindIcon /></BigIcon>
              <Line>Find &amp;</Line>
              <Line>Select <Chev /></Line>
            </BigBtn>
          </GroupBody>
          <GroupLabel $pl={53}>Editing</GroupLabel>
        </Group>

        <Collapse><svg width="14" height="8" viewBox="0 0 14 8"><path d="M.5 7.500l6.500-6.500 6.500 6.500" fill="none" stroke="#555" /></svg></Collapse>
      </Ribbon>

      <FormulaBar>
        <NameBox>A1<SolidDown c="#777" /></NameBox>
        <Dots><svg width="3" height="13" viewBox="0 0 3 13"><path d="M1.500 0v2M1.500 5v2M1.500 10v2" stroke="#999" strokeWidth="2" /></svg></Dots>
        <FxBox>
          <FxSlot><svg width="12" height="12" viewBox="0 0 12 12"><path d="M1 1l10 10M11 1L1 11" stroke="#b5b5b5" strokeWidth="1.400" /></svg></FxSlot>
          <FxSlot><svg width="13" height="11" viewBox="0 0 13 11"><path d="M1 6l4 4 7-9" fill="none" stroke="#b5b5b5" strokeWidth="1.500" /></svg></FxSlot>
          <FxSlot>fx</FxSlot>
        </FxBox>
        <FormulaInput>Timestamp<Chev c="#aaa" /></FormulaInput>
      </FormulaBar>

      <SheetArea>
        <Sheet>
          <Corner />
          {columns.map(([c], i) => <ColHead key={i} $sel={i < 15}>{c}</ColHead>)}
          {Array.from({ length: 21 }, (_, r) => {
            const sel = r < 17;
            const vals = r === 0 ? [...head, '', ''] : r < 17 ? rowValues(r - 1) : Array(17).fill('');
            return (
              <React.Fragment key={r}>
                <RowHead $sel={sel}>{r + 1}</RowHead>
                {vals.map((v, i) => (
                  <Cell key={i} $sel={sel && i < 15} $right={i === 10 && r > 0} $over={r === 0 && i === 14}
                    $num={r > 0 && numCols.has(i)} $hash={r > 0 && i === 3}>{v}</Cell>
                ))}
              </React.Fragment>
            );
          })}
          <Selection><FillHandle /></Selection>
        </Sheet>
        <VScroll>
          <ScrollBtn><svg width="8" height="5" viewBox="0 0 8 5"><path d="M4 0l4 5H0z" fill="#333" /></svg></ScrollBtn>
          <VThumb />
          <VGap />
          <ScrollBtn $h={13}><svg width="8" height="5" viewBox="0 0 8 5"><path d="M0 0h8L4 5z" fill="#333" /></svg></ScrollBtn>
        </VScroll>
      </SheetArea>

      <Dialog>
        <DialogTitle>
          <DTitleText>Create Table</DTitleText>
          <DHelp>?</DHelp>
          <DClose><svg width="11" height="11" viewBox="0 0 11 11"><path d="M.5.5l10 10M10.500.5l-10 10" stroke="#333" /></svg></DClose>
        </DialogTitle>
        <DLabel><u>W</u>here is the data for your table?</DLabel>
        <DInputRow>
          <DInput><DSelText>$A$1:$S$17</DSelText></DInput>
          <DRefBtn><svg width="11" height="12" viewBox="0 0 11 12"><path d="M5.500 1L10 6H7.500v3h-4V6H1z" fill="#111" /><path d="M1 11h9" stroke="#111" strokeWidth="1.400" /></svg></DRefBtn>
        </DInputRow>
        <DCheckRow>
          <DCheck><svg width="11" height="9" viewBox="0 0 11 9"><path d="M1 4.500l3 3 6-6.500" fill="none" stroke="#555" strokeWidth="1.400" /></svg></DCheck>
          <span><u>M</u>y table has headers</span>
        </DCheckRow>
        <DButtons>
          <DBtn $main>OK</DBtn>
          <DBtn>Cancel</DBtn>
        </DButtons>
      </Dialog>

      <TabsRow>
        <NavSlot $w={43}><svg width="5" height="9" viewBox="0 0 5 9"><path d="M5 0v9L0 4.500z" fill="#c2c2c2" /></svg></NavSlot>
        <NavSlot $w={28}><svg width="5" height="9" viewBox="0 0 5 9"><path d="M0 0v9l5-4.500z" fill="#c2c2c2" /></svg></NavSlot>
        <NavSlot $w={29} />
        <SheetTab>tracking_log_accepted</SheetTab>
        <NavSlot $w={83}><svg width="16" height="16" viewBox="0 0 16 16"><circle cx="8" cy="8" r="7.300" fill="none" stroke="#777" /><path d="M8 4v8M4 8h8" stroke="#777" strokeWidth="1.400" /></svg></NavSlot>
        <NavSlot $w={422} />
        <NavSlot $w={14}><svg width="3" height="13" viewBox="0 0 3 13"><path d="M1.500 0v2M1.500 5v2M1.500 10v2" stroke="#999" strokeWidth="2" /></svg></NavSlot>
        <HScroll>
          <ScrollBtn $w={14}><svg width="5" height="8" viewBox="0 0 5 8"><path d="M5 0v8L0 4z" fill="#333" /></svg></ScrollBtn>
          <HThumb />
          <VGap />
          <ScrollBtn $w={14}><svg width="5" height="8" viewBox="0 0 5 8"><path d="M0 0v8l5-4z" fill="#333" /></svg></ScrollBtn>
        </HScroll>
      </TabsRow>

      <StatusBar>
        <StatusText $ml={8} $w={44}>Point</StatusText>
        <StatusIcon $w={16}><svg width="14" height="13" viewBox="0 0 14 13"><circle cx="3" cy="3" r="2.500" fill="#666" /><path d="M6 1h8v3H6z" fill="#666" /><path d="M1 6.500h12v6H1zM5 6.500v6M9 6.500v6M1 9.500h12" fill="#fff" stroke="#777" /></svg></StatusIcon>
        <StatusIcon $w={18} $ml={16}><svg width="17" height="14" viewBox="0 0 17 14"><path d="M6 2a6 6 0 100 10M9 2v-2M3 7H0M8 5c0-2 7-2 7 0s-3.500 2-3.500 5M11.500 12v2" fill="none" stroke="#555" strokeWidth="1.300" /></svg></StatusIcon>
        <StatusText $ml={1} $w={570}>Accessibility: Unavailable</StatusText>
        <StatusText $w={126}>Average: 30417.9664</StatusText>
        <StatusText $w={72}>Count: 323</StatusText>
        <StatusText $w={109}>Sum: 1460062.387</StatusText>
        <ViewBtn $on><svg width="13" height="13" viewBox="0 0 13 13"><path d="M.5.5h12v12H.5zM4.500.5v12M8.500.5v12M.5 4.500h12M.5 8.500h12" fill="none" stroke="#666" /></svg></ViewBtn>
        <ViewBtn><svg width="14" height="13" viewBox="0 0 14 13"><path d="M.5.5h13v12H.5zM3.500 3.500h7v6h-7zM5 5.500h4M5 7.500h4" fill="none" stroke="#666" /></svg></ViewBtn>
        <ViewBtn><svg width="14" height="13" viewBox="0 0 14 13"><path d="M.5.5h13v12H.5zM.5 7.500h13M5.500.5v7" fill="none" stroke="#666" /></svg></ViewBtn>
        <StatusIcon $w={17} $ml={1}><svg width="8" height="2" viewBox="0 0 8 2"><path d="M0 1h8" stroke="#555" /></svg></StatusIcon>
        <Slider><SliderThumb /></Slider>
        <StatusIcon $w={16}><svg width="9" height="9" viewBox="0 0 9 9"><path d="M0 4.500h9M4.500 0v9" stroke="#555" /></svg></StatusIcon>
        <StatusText $ml={10}>100%</StatusText>
      </StatusBar>

      <Taskbar>
        <TaskBtn><WinLogo /></TaskBtn>
        <SearchBox>
          <SearchIcon><svg width="16" height="16" viewBox="0 0 16 16"><circle cx="10" cy="6" r="5" fill="none" stroke="#222" strokeWidth="1.200" /><path d="M6.500 9.500L1 15" stroke="#222" strokeWidth="1.400" /></svg></SearchIcon>
          Type here to search
        </SearchBox>
        <TaskBtn><svg width="16" height="15" viewBox="0 0 16 15"><path d="M1 0h10M1 14h10M1 3h10v8H1zM14 0v2M14 4v6M14 12v2" fill="none" stroke="#fff" /></svg></TaskBtn>
        <TaskBtn $ml={3} $bg="#995a26" $line="#f07a22"><EdgeIcon /></TaskBtn>
        <TaskBtn><FolderIcon /></TaskBtn>
        <TaskBtn $ml={2}><FirefoxIcon /></TaskBtn>
        <TaskBtn $ml={1} $line="#76b9ed" $lw={40}><RarIcon /></TaskBtn>
        <TaskBtn $line="#76b9ed" $lw={40}><OutlookIcon /></TaskBtn>
        <TaskBtn $bg="#35454f" $line="#76b9ed" $ml={2}><ExcelIcon /></TaskBtn>
        <Tray $ml={386}><svg width="12" height="7" viewBox="0 0 12 7"><path d="M.5 6.500l5.500-5.500 5.500 5.500" fill="none" stroke="#fff" /></svg></Tray>
        <Tray><svg width="13" height="16" viewBox="0 0 13 16"><path d="M1.500 5.500h6v6h-6zM7.500 7.500l4-2v6l-4-2M2 2.500c2-2 5-2 7 0M2 14c2 2 5 2 7 0" fill="none" stroke="#fff" /></svg></Tray>
        <Tray><svg width="17" height="14" viewBox="0 0 17 14"><path d="M5.500 1.500h11v8h-11zM10 9.500v3M7 13h6M.5 2.500h5v3h-5zM3 5.500v7" fill="none" stroke="#fff" /></svg></Tray>
        <Tray><svg width="17" height="13" viewBox="0 0 17 13"><path d="M.5 4.500h3l4-4v12l-4-4h-3zM10 4c1 1 1 4 0 5M12.500 2c2 2 2 7 0 9M15 .5c2.500 3 2.500 9 0 12" fill="none" stroke="#fff" /></svg></Tray>
        <Clock>3:04 PM<br />12/2/2024</Clock>
        <TaskBtn $w={44}><svg width="16" height="15" viewBox="0 0 16 15"><path d="M.5.5h15v11H7l-3 3v-3H.5z" fill="none" stroke="#fff" /></svg></TaskBtn>
        <ShowDesktop />
      </Taskbar>

      <Watermark width="200" height="62" viewBox="0 0 200 62">
        <g fill="rgba(255,255,255,.28)" stroke="rgba(140,140,140,.4)" strokeWidth="1.200" fontFamily="Liberation Sans" fontSize="46" fontWeight="700">
          <text x="2" y="49" textLength="58" lengthAdjust="spacingAndGlyphs">ANY</text>
          <text x="135" y="49" textLength="59" lengthAdjust="spacingAndGlyphs">RUN</text>
        </g>
        <path d="M62 12v36M82 4v54l48-27zM90 17v28l26-14z" fill="rgba(220,220,220,.25)" stroke="rgba(140,140,140,.4)" strokeWidth="1.200" fillRule="evenodd" />
      </Watermark>
      <CrossCursor width="15" height="15" viewBox="0 0 15 15"><path d="M5 .5h5v4.500h4.500v5H10v4.500H5V10H.5V5H5z" fill="#fff" stroke="#000" /></CrossCursor>
    </Page>
  );
}
